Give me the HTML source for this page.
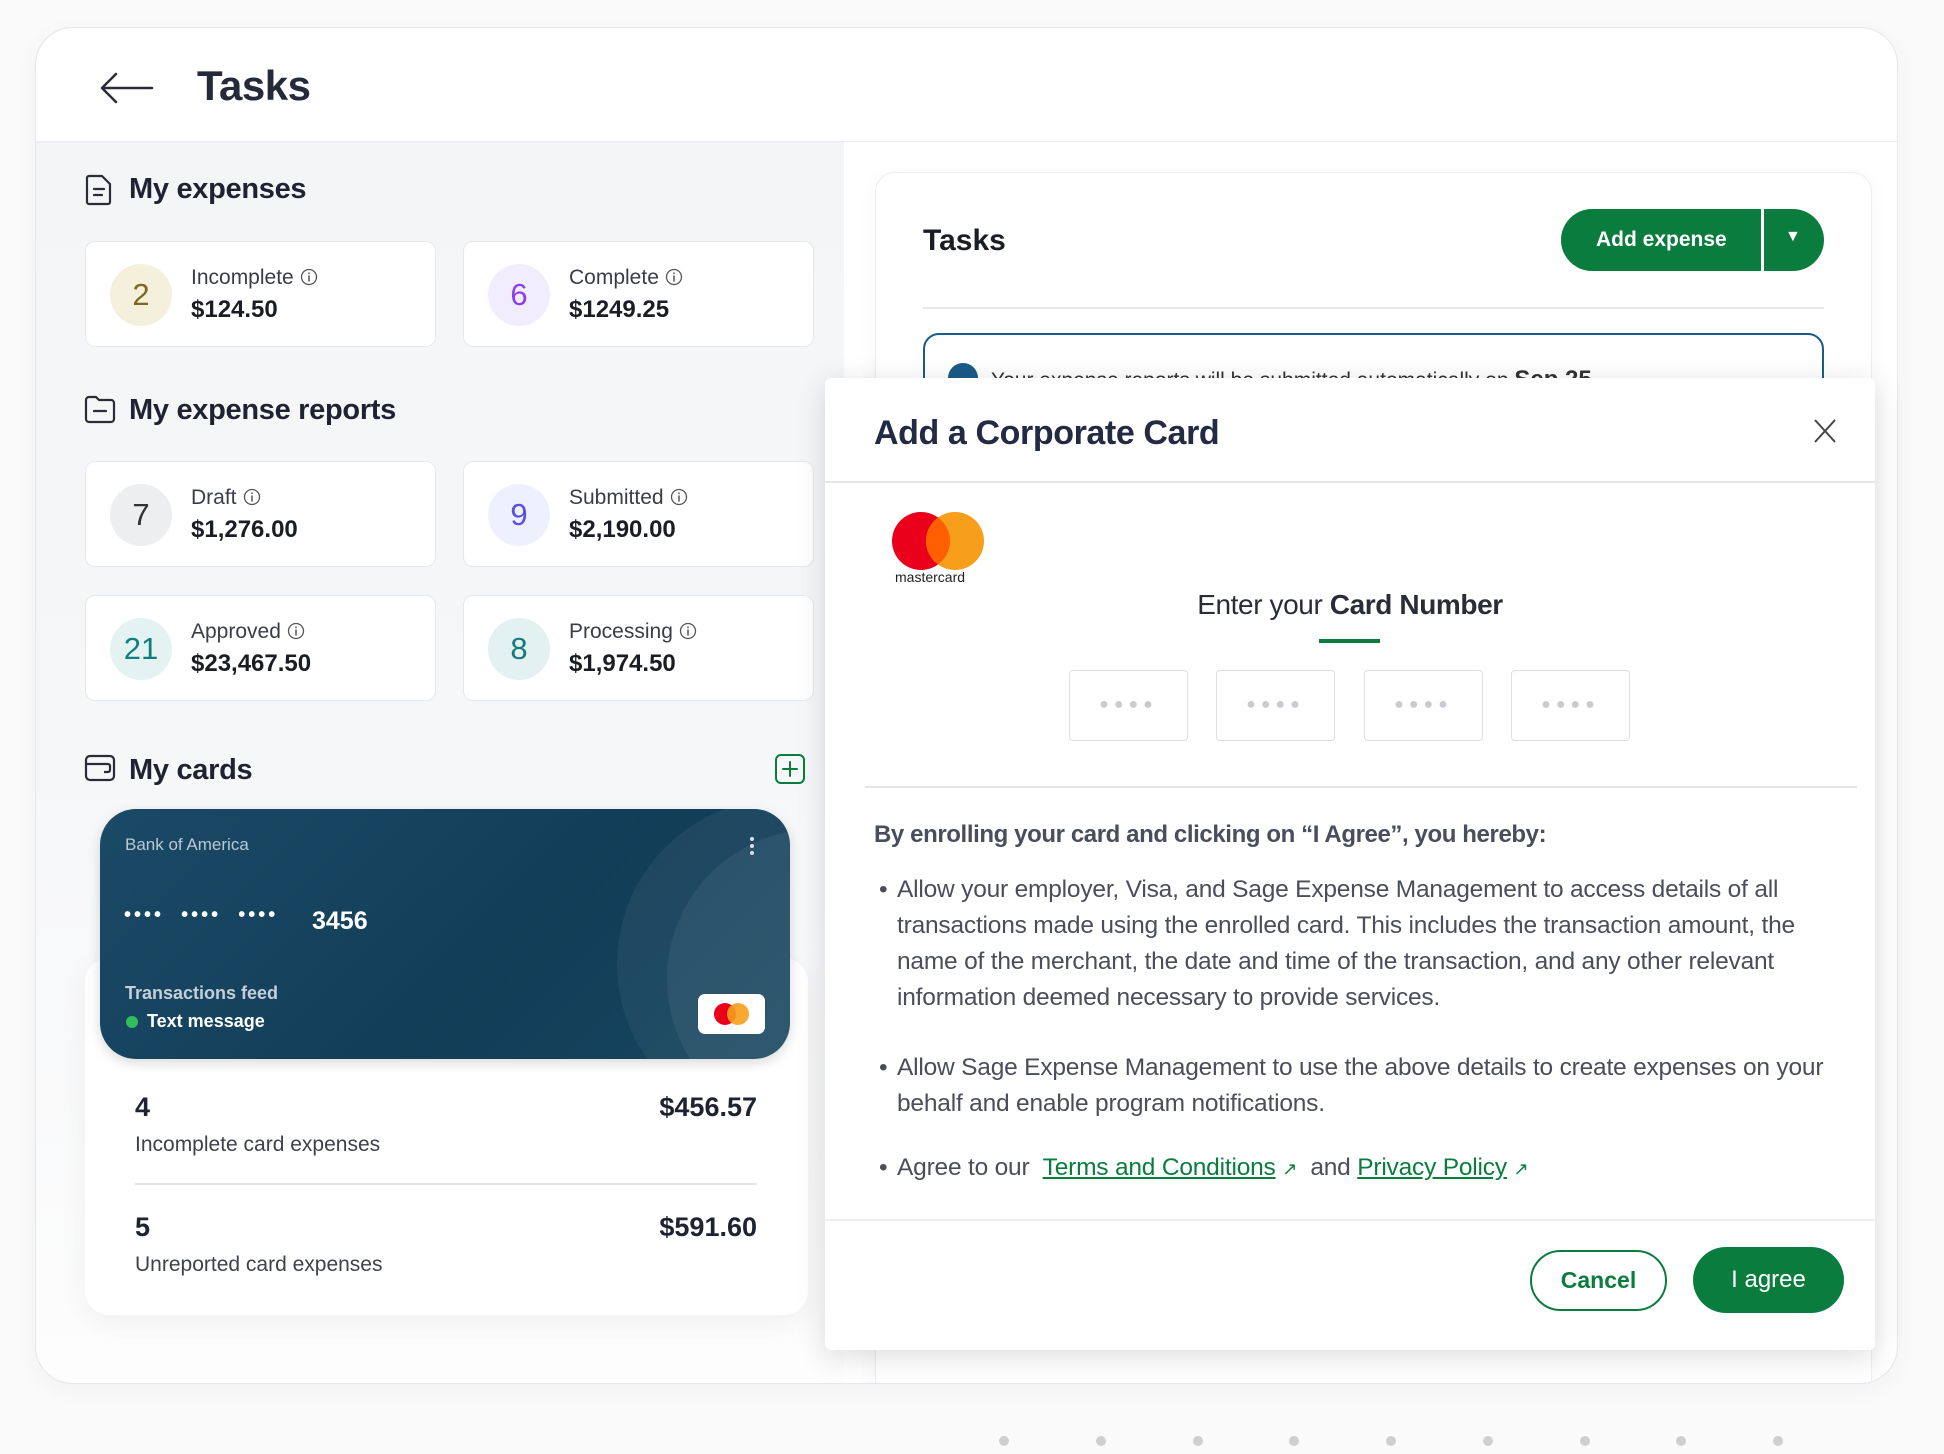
<!DOCTYPE html>
<html><head><meta charset="utf-8"><style>
*{box-sizing:border-box;margin:0;padding:0}
body{width:1944px;height:1454px;background:#fafafb;font-family:"Liberation Sans",sans-serif;color:#1f2230;position:relative;overflow:hidden}
.abs{position:absolute}
.main{left:35px;top:27px;width:1863px;height:1357px;background:#fff;border:1px solid #e4e6ec;border-radius:38px;overflow:hidden;box-shadow:0 6px 24px rgba(0,0,0,0.04)}
.t{position:absolute;white-space:nowrap}
.stat{position:absolute;width:351px;height:106px;background:#fff;border:1px solid #e6e8ec;border-radius:10px}
.stat .c{position:absolute;left:24px;top:22px;width:62px;height:62px;border-radius:50%;font-size:31px;text-align:center;line-height:62px}
.stat .l{position:absolute;left:105px;top:24px;font-size:21px;color:#3a3d48}
.stat .l svg{vertical-align:-2px;margin-left:6px}
.stat .a{position:absolute;left:105px;top:54px;font-size:24px;font-weight:bold;color:#1b1d24}
.sec{font-size:29px;font-weight:bold;color:#1f2230;letter-spacing:-0.3px}
.box{position:absolute;top:670px;width:119px;height:71px;border:1.5px solid #dcdee2;border-radius:4px;text-align:center;line-height:68px;color:#c9cbd0;font-size:16px;letter-spacing:5px}
.bl{font-size:24.5px;color:#4b4e5a;line-height:36px;letter-spacing:-0.2px}
.dot{position:absolute;top:1436px;width:10px;height:10px;border-radius:50%;background:#cfcfd2}
a{color:#0a7d3e;text-decoration:underline}
</style></head><body>
<div class="abs main">
  <svg class="abs" style="left:62px;top:42px" width="56" height="36" viewBox="0 0 56 36"><path d="M54 18H4M18 4L4 18l14 14" fill="none" stroke="#2a2d38" stroke-width="2.5" stroke-linecap="round" stroke-linejoin="round"/></svg>
  <div class="t" style="left:161px;top:34px;font-size:42px;font-weight:bold;color:#252a3a;letter-spacing:-0.5px">Tasks</div>
  <div class="abs" style="left:0;top:114px;width:808px;height:1243px;background:linear-gradient(180deg,#f3f5f7 0%,#f6f7f9 50%,#fdfdfd 100%);border-top:1px solid #eceef2"></div>
  <div class="abs" style="left:0;top:113px;width:1863px;height:1px;background:#eceef2"></div>

  <svg class="abs" style="left:49px;top:146px" width="28" height="32" viewBox="0 0 28 32"><path d="M4 2h13l8 8v18a2 2 0 0 1-2 2H4a2 2 0 0 1-2-2V4a2 2 0 0 1 2-2z" fill="none" stroke="#2a2d38" stroke-width="2.2" stroke-linejoin="round"/><path d="M9 15h10M9 21h8" stroke="#2a2d38" stroke-width="2.2" stroke-linecap="round"/></svg>
  <div class="t sec" style="left:93px;top:145px">My expenses</div>

  <div class="stat" style="left:49px;top:213px"><div class="c" style="background:#f5f0dc;color:#7a6a1e">2</div><div class="l">Incomplete<svg width="18" height="18" viewBox="0 0 18 18"><circle cx="9" cy="9" r="7.5" fill="none" stroke="#555" stroke-width="1.3"/><path d="M9 8v5M9 5v.5" stroke="#555" stroke-width="1.5" stroke-linecap="round"/></svg></div><div class="a">$124.50</div></div>
  <div class="stat" style="left:427px;top:213px"><div class="c" style="background:#f2edfd;color:#8a3ff0">6</div><div class="l">Complete<svg width="18" height="18" viewBox="0 0 18 18"><circle cx="9" cy="9" r="7.5" fill="none" stroke="#555" stroke-width="1.3"/><path d="M9 8v5M9 5v.5" stroke="#555" stroke-width="1.5" stroke-linecap="round"/></svg></div><div class="a">$1249.25</div></div>

  <svg class="abs" style="left:48px;top:366px" width="32" height="30" viewBox="0 0 32 30"><path d="M2 6a3 3 0 0 1 3-3h7l3 3h12a3 3 0 0 1 3 3v16a3 3 0 0 1-3 3H5a3 3 0 0 1-3-3z" fill="none" stroke="#2a2d38" stroke-width="2.2" stroke-linejoin="round"/><path d="M10 17h12" stroke="#2a2d38" stroke-width="2.2" stroke-linecap="round"/></svg>
  <div class="t sec" style="left:93px;top:366px">My expense reports</div>

  <div class="stat" style="left:49px;top:433px"><div class="c" style="background:#eceef0;color:#333">7</div><div class="l">Draft<svg width="18" height="18" viewBox="0 0 18 18"><circle cx="9" cy="9" r="7.5" fill="none" stroke="#555" stroke-width="1.3"/><path d="M9 8v5M9 5v.5" stroke="#555" stroke-width="1.5" stroke-linecap="round"/></svg></div><div class="a">$1,276.00</div></div>
  <div class="stat" style="left:427px;top:433px"><div class="c" style="background:#eef0fd;color:#5750e0">9</div><div class="l">Submitted<svg width="18" height="18" viewBox="0 0 18 18"><circle cx="9" cy="9" r="7.5" fill="none" stroke="#555" stroke-width="1.3"/><path d="M9 8v5M9 5v.5" stroke="#555" stroke-width="1.5" stroke-linecap="round"/></svg></div><div class="a">$2,190.00</div></div>
  <div class="stat" style="left:49px;top:567px"><div class="c" style="background:#e4f3f1;color:#0e7e7e">21</div><div class="l">Approved<svg width="18" height="18" viewBox="0 0 18 18"><circle cx="9" cy="9" r="7.5" fill="none" stroke="#555" stroke-width="1.3"/><path d="M9 8v5M9 5v.5" stroke="#555" stroke-width="1.5" stroke-linecap="round"/></svg></div><div class="a">$23,467.50</div></div>
  <div class="stat" style="left:427px;top:567px"><div class="c" style="background:#e4f1f1;color:#137b7b">8</div><div class="l">Processing<svg width="18" height="18" viewBox="0 0 18 18"><circle cx="9" cy="9" r="7.5" fill="none" stroke="#555" stroke-width="1.3"/><path d="M9 8v5M9 5v.5" stroke="#555" stroke-width="1.5" stroke-linecap="round"/></svg></div><div class="a">$1,974.50</div></div>

  <svg class="abs" style="left:48px;top:726px" width="32" height="28" viewBox="0 0 32 28"><rect x="2" y="2" width="28" height="24" rx="4" fill="none" stroke="#2a2d38" stroke-width="2.2"/><path d="M2 10h22a2 2 0 0 1 2 2v4a2 2 0 0 1-2 2H20" fill="none" stroke="#2a2d38" stroke-width="2.2"/></svg>
  <div class="t sec" style="left:93px;top:726px">My cards</div>
  <svg class="abs" style="left:738px;top:725px" width="32" height="32" viewBox="0 0 32 32"><rect x="2" y="2" width="28" height="28" rx="5" fill="none" stroke="#0a7d3e" stroke-width="2"/><path d="M16 9v14M9 16h14" stroke="#0a7d3e" stroke-width="2" stroke-linecap="round"/></svg>

  <div class="abs" style="left:49px;top:930px;width:723px;height:357px;background:#fff;border-radius:24px;box-shadow:0 8px 30px rgba(0,0,0,0.05)"></div>
  <div class="abs" style="left:64px;top:781px;width:690px;height:250px;border-radius:36px;background:linear-gradient(135deg,#1b4a66,#123d58 60%,#17465f);overflow:hidden;box-shadow:0 4px 12px rgba(0,0,0,0.15)">
    <div class="abs" style="left:517px;top:-10px;width:330px;height:330px;border-radius:50%;background:rgba(255,255,255,0.05)"></div>
    <div class="abs" style="left:567px;top:20px;width:300px;height:300px;border-radius:50%;background:rgba(255,255,255,0.06)"></div>
    <div class="t" style="left:25px;top:26px;font-size:17px;color:#b9c8d4">Bank of America</div>
    <div class="abs" style="left:650px;top:28px;width:4px;height:4px;border-radius:2px;background:#dde;box-shadow:0 7px 0 #dde,0 14px 0 #dde"></div>
    <div class="t" style="left:24px;top:95px;font-size:20px;color:#fff;letter-spacing:3px;font-weight:bold">•••• &nbsp;•••• &nbsp;••••</div>
    <div class="t" style="left:212px;top:98px;font-size:25px;color:#fff;font-weight:bold">3456</div>
    <div class="t" style="left:25px;top:174px;font-size:18px;color:#c3cfd9;font-weight:bold">Transactions feed</div>
    <div class="abs" style="left:26px;top:207px;width:12px;height:12px;border-radius:50%;background:#2fbf5b"></div>
    <div class="t" style="left:47px;top:202px;font-size:18px;color:#fff;font-weight:bold">Text message</div>
    <div class="abs" style="left:598px;top:185px;width:67px;height:40px;background:#fff;border-radius:7px"></div>
    <div class="abs" style="left:614px;top:194px;width:22px;height:22px;border-radius:50%;background:#eb001b"></div>
    <div class="abs" style="left:627px;top:194px;width:22px;height:22px;border-radius:50%;background:rgba(247,158,27,0.9)"></div>
  </div>
  <div class="t" style="left:99px;top:1064px;font-size:27px;font-weight:bold">4</div>
  <div class="t" style="left:555px;top:1064px;width:166px;text-align:right;font-size:27px;font-weight:bold">$456.57</div>
  <div class="t" style="left:99px;top:1105px;font-size:21px;color:#3f424c">Incomplete card expenses</div>
  <div class="abs" style="left:99px;top:1155px;width:622px;height:1.5px;background:#e2e4e8"></div>
  <div class="t" style="left:99px;top:1184px;font-size:27px;font-weight:bold">5</div>
  <div class="t" style="left:555px;top:1184px;width:166px;text-align:right;font-size:27px;font-weight:bold">$591.60</div>
  <div class="t" style="left:99px;top:1225px;font-size:21px;color:#3f424c">Unreported card expenses</div>

  <div class="abs" style="left:839px;top:144px;width:997px;height:1260px;background:#fff;border:1px solid #eceef2;border-radius:20px;box-shadow:0 4px 20px rgba(0,0,0,0.04)"></div>
  <div class="t" style="left:887px;top:196px;font-size:30px;font-weight:bold;color:#1b1d24">Tasks</div>
  <div class="abs" style="left:1525px;top:181px;width:263px;height:62px;border-radius:31px;background:#0a7d3e"></div>
  <div class="abs" style="left:1725px;top:181px;width:3px;height:62px;background:#fff"></div>
  <div class="t" style="left:1560px;top:200px;font-size:21px;font-weight:bold;color:#fff">Add expense</div>
  <div class="t" style="left:1749px;top:200px;font-size:16px;color:#fff">▼</div>
  <div class="abs" style="left:887px;top:279px;width:901px;height:1.5px;background:#e6e8ec"></div>
  <div class="abs" style="left:887px;top:305px;width:901px;height:80px;border:2px solid #1a5b8a;border-radius:16px"></div>
  <div class="abs" style="left:912px;top:335px;width:30px;height:30px;border-radius:50%;background:#1a5b8a"></div>
  <div class="t" style="left:955px;top:338px;font-size:21px;color:#333">Your expense reports will be submitted automatically on <b style="font-size:24px">Sep 25</b></div>
</div>

<div class="abs" style="left:825px;top:378px;width:1050px;height:972px;background:#fff;border-radius:6px;box-shadow:0 6px 30px rgba(0,0,0,0.14);overflow:hidden">
  <div class="t" style="left:49px;top:36px;font-size:34px;font-weight:bold;color:#222a44;letter-spacing:-0.4px">Add a Corporate Card</div>
  <svg class="abs" style="left:988px;top:40px" width="24" height="26" viewBox="0 0 24 26"><path d="M2 2l20 22M22 2L2 24" stroke="#444" stroke-width="2"/></svg>
  <div class="abs" style="left:0;top:103px;width:1050px;height:2px;background:#e4e6ea"></div>
  <div class="abs" style="left:67px;top:134px;width:58px;height:58px;border-radius:50%;background:#eb001b"></div>
  <div class="abs" style="left:101px;top:134px;width:58px;height:58px;border-radius:50%;background:#f79e1b"></div>
  <div class="abs" style="left:101px;top:134px;width:58px;height:58px;border-radius:50%;clip-path:circle(29px at -5px 29px);background:#ff5f00"></div>
  <div class="t" style="left:70px;top:191px;font-size:14px;color:#222">mastercard</div>
  <div class="t" style="left:0;width:1050px;text-align:center;top:211px;font-size:28px;color:#2a2d38;letter-spacing:-0.4px">Enter your <b>Card Number</b></div>
  <div class="abs" style="left:494px;top:261px;width:61px;height:4px;background:#0a7d3e"></div>
  <div class="box" style="left:244px;top:292px">●●●●</div>
  <div class="box" style="left:391px;top:292px">●●●●</div>
  <div class="box" style="left:539px;top:292px">●●●●</div>
  <div class="box" style="left:686px;top:292px">●●●●</div>
  <div class="abs" style="left:40px;top:408px;width:992px;height:1.5px;background:#e4e6ea"></div>
  <div class="t" style="left:49px;top:443px;font-size:24px;font-weight:bold;color:#4a4e5c;letter-spacing:-0.4px">By enrolling your card and clicking on “I Agree”, you hereby:</div>
  <div class="t bl" style="left:54px;top:494px">•</div>
  <div class="t bl" style="left:72px;top:494px">Allow your employer, Visa, and Sage Expense Management to access details of all<br>transactions made using the enrolled card. This includes the transaction amount, the<br>name of the merchant, the date and time of the transaction, and any other relevant<br>information deemed necessary to provide services.</div>
  <div class="t bl" style="left:54px;top:672px">•</div>
  <div class="t bl" style="left:72px;top:672px">Allow Sage Expense Management to use the above details to create expenses on your<br>behalf and enable program notifications.</div>
  <div class="t bl" style="left:54px;top:772px">•</div>
  <div class="t bl" style="left:72px;top:772px">Agree to our &nbsp;<a>Terms and Conditions</a> <span style="color:#0a7d3e;font-size:18px">↗</span> &nbsp;and <a>Privacy Policy</a> <span style="color:#0a7d3e;font-size:18px">↗</span></div>
  <div class="abs" style="left:0;top:841px;width:1050px;height:2px;background:#eceef0"></div>
  <div class="abs" style="left:705px;top:872px;width:137px;height:61px;border:2.5px solid #0a7d3e;border-radius:31px;text-align:center;line-height:56px;font-size:23px;font-weight:bold;color:#0a7d3e">Cancel</div>
  <div class="abs" style="left:868px;top:869px;width:151px;height:66px;background:#0a7d3e;border-radius:33px;text-align:center;line-height:66px;font-size:24px;color:#fff">I agree</div>
</div>

<div class="dot" style="left:999px"></div><div class="dot" style="left:1096px"></div><div class="dot" style="left:1193px"></div><div class="dot" style="left:1289px"></div><div class="dot" style="left:1386px"></div><div class="dot" style="left:1483px"></div><div class="dot" style="left:1580px"></div><div class="dot" style="left:1676px"></div><div class="dot" style="left:1773px"></div>
</body></html>
